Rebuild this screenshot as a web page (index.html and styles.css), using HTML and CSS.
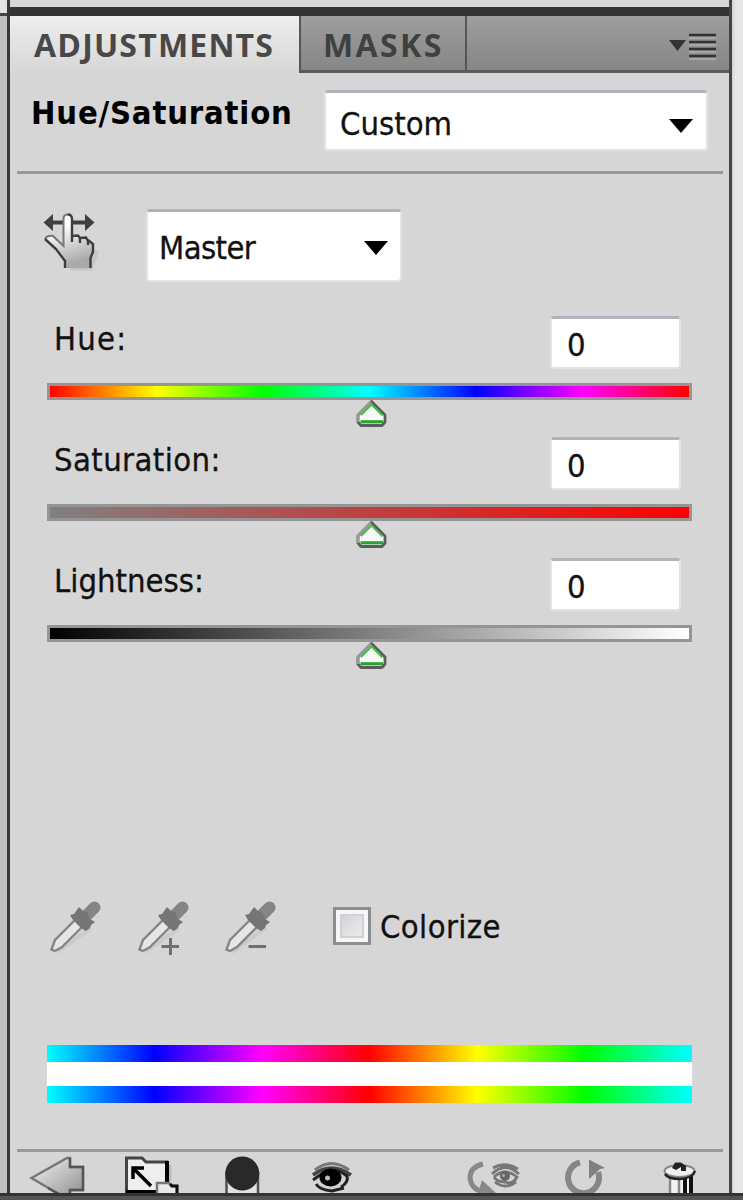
FILE: index.html
```html
<!DOCTYPE html>
<html lang="en">
<head>
    <meta charset="UTF-8">
    <meta name="viewport" content="width=device-width, initial-scale=1.0">
    <title>Adjustments</title>
    <link rel="stylesheet" href="styles.css">
</head>
<body>

<svg class="defs" width="0" height="0">
    <defs>
        <linearGradient id="metal" x1="0" y1="0" x2="1" y2="1">
            <stop offset="0" stop-color="#f4f4f4"/>
            <stop offset="1" stop-color="#8c8c8c"/>
        </linearGradient>
        <linearGradient id="skin" x1="0" y1="0" x2="0.3" y2="1">
            <stop offset="0.3" stop-color="#ffffff"/>
            <stop offset="1" stop-color="#aaaaaa"/>
        </linearGradient>
        <symbol id="dropper" viewBox="46 896 60 62">
            <path d="M57 952L91 928" stroke="#cbcbcb" stroke-width="4"/>
            <path d="M76 919L55 940L51.5 949.5L55 951L62 947L83 926Z" fill="#e6e6e6" stroke="#858585" stroke-width="2.4"/>
            <path d="M85 917L94.500 907.500" stroke="#858585" stroke-width="12" stroke-linecap="round"/>
            <path d="M79 907L83 911L88 913L90 919L95 922L91 925L90 928L86 931L81 928L73 920L70 915L74 914Z" fill="#757575"/>
        </symbol>
        <symbol id="thumb" viewBox="355 398 34 32">
            <path d="M371.500 401.500L385 415V422L382 425.500H361L358 422V415Z" fill="#f8f8f8" stroke="#5c5c5c" stroke-width="2.800" stroke-linejoin="round"/>
            <path d="M358 422V415L371 402" fill="none" stroke="#999" stroke-width="2.500"/>
            <path d="M361 415L371.500 404.500L382.500 415.500" fill="none" stroke="#3fc144" stroke-width="1.800"/>
            <path d="M360.500 421.800H383" stroke="#2aa32e" stroke-width="3.200"/>
        </symbol>
    </defs>
</svg>

<div class="window">
    <div class="left-edge"><div class="left-cap"></div></div>
    <div class="panel">
        <div class="top-strip"></div>

        <div class="tabs">
            <div class="tab active"><span>ADJUSTMENTS</span></div>
            <div class="tab"><span class="masks">MASKS</span></div>
            <div class="tab-space">
                <svg class="menu" width="50" height="28" viewBox="668 32 50 28">
                    <path d="M669 40H686L677.500 51Z" fill="#333"/>
                    <path d="M689 38H716M689 45H716M689 52H716M689 59H716" stroke="#b0b0b0" stroke-width="1.500"/>
                    <path d="M689 35H716M689 42H716M689 49H716M689 56H716" stroke="#333" stroke-width="2.600"/>
                </svg>
            </div>
        </div>

        <div class="header">
            <h1>Hue/Saturation</h1>
            <div class="select preset">
                <span>Custom</span>
                <svg width="24" height="14" viewBox="0 0 24 14"><path d="M0 0H24L12 14Z"/></svg>
            </div>
        </div>

        <div class="content">
            <div class="range-row">
                <svg class="hand" width="64" height="66" viewBox="40 210 64 66">
                    <path d="M70 269.500H91L97 252" fill="none" stroke="#c6c6c6" stroke-width="4"/>
                    <path d="M48 223.500H90" stroke="#404040" stroke-width="4"/>
                    <path d="M43.500 223.500L53 215V232ZM94.500 223.500L85 215V232Z" fill="#404040"/>
                    <path d="M63.500 247V220Q63.500 215.500 67.500 215.500Q72 215.500 72 220V237L78 236.500L80 239L85 238.500L88 241L93 245V253L90 269H66V261L56 249L45 240Q47 236 53 237Z" fill="url(#skin)"/>
                    <path d="M45 240Q47 236 53 237L63.500 247V220Q63.500 215.500 67.500 215.500" fill="none" stroke="#777" stroke-width="2"/>
                    <path d="M67.500 215.500Q72 215.500 72 220V243M72 237L78 236.500L80 239V244M80 239L86 238.500L88 242V246M88 241L93 245V253L90.500 259V269M45 240L56 250L65 262V269" fill="none" stroke="#3d3d3d" stroke-width="2.400"/>
                </svg>
                <div class="select range">
                    <span>Master</span>
                    <svg width="24" height="14" viewBox="0 0 24 14"><path d="M0 0H24L12 14Z"/></svg>
                </div>
            </div>

            <div class="control">
                <div class="control-top"><label class="hue-label">Hue:</label><div class="value">0</div></div>
                <div class="track hue"></div>
                <svg class="thumb" width="34" height="32"><use href="#thumb"/></svg>
            </div>
            <div class="control">
                <div class="control-top"><label class="saturation-label">Saturation:</label><div class="value">0</div></div>
                <div class="track saturation"></div>
                <svg class="thumb" width="34" height="32"><use href="#thumb"/></svg>
            </div>
            <div class="control">
                <div class="control-top"><label>Lightness:</label><div class="value">0</div></div>
                <div class="track lightness"></div>
                <svg class="thumb" width="34" height="32"><use href="#thumb"/></svg>
            </div>

            <div class="tools">
                <svg width="60" height="62"><use href="#dropper"/></svg>
                <svg width="60" height="62"><use href="#dropper"/><path d="M27.500 50.500H45M36.500 42V59" stroke="#707070" stroke-width="3"/></svg>
                <svg width="60" height="62"><use href="#dropper"/><path d="M27.500 50.500H45" stroke="#707070" stroke-width="3"/></svg>
                <div class="checkbox"></div>
                <span class="colorize">Colorize</span>
            </div>

            <div class="spectrum">
                <div class="rainbow"></div>
                <div class="rainbow"></div>
            </div>
        </div>

        <div class="footer">
            <svg width="60" height="41" viewBox="28 1152 60 41">
                <path d="M31.500 1178L67 1158H70V1167H83V1190H70V1199H67Z" fill="url(#metal)" stroke="#777" stroke-width="2.400"/>
                <path d="M70 1158V1167H83V1190H70V1199L66 1198L48 1188" fill="none" stroke="#555" stroke-width="2.400"/>
            </svg>
            <svg width="60" height="41" viewBox="123 1152 60 41">
                <path d="M170 1165V1181" fill="none" stroke="#bbb" stroke-width="3"/>
                <path d="M126.500 1192V1158H142L146 1162H166.500V1192Z" fill="#eee" stroke="#444" stroke-width="3"/>
                <path d="M167 1161V1183M126 1192H157" stroke="#000" stroke-width="4"/>
                <path d="M133 1168L151 1186M144 1168H133V1179" fill="none" stroke="#000" stroke-width="3.500"/>
                <path d="M157 1195V1183H169L172 1186H177V1195Z" fill="#e8e8e8" stroke="#777" stroke-width="2.500"/>
                <path d="M170 1184L172 1186H177V1195" fill="none" stroke="#111" stroke-width="3"/>
            </svg>
            <svg width="40" height="41" viewBox="222 1152 40 41">
                <path d="M226.500 1173V1195H258V1173Z" fill="#e2e2e2" stroke="#505050" stroke-width="2.500"/>
                <circle cx="242.300" cy="1173.500" r="17" fill="#292929"/>
            </svg>
            <svg width="50" height="41" viewBox="307 1152 50 41">
                <path d="M315 1170Q331 1157 349 1170" fill="none" stroke="#777" stroke-width="3"/>
                <path d="M313 1173Q330 1160 350 1174L347 1184Q338 1193 326 1190L313 1179Z" fill="#d0d0d0"/>
                <path d="M313 1175Q331 1161 351 1175" fill="none" stroke="#444" stroke-width="3.500"/>
                <path d="M313 1180L320 1175Q333 1165 347 1176Q349 1182 341 1187M316 1184Q320 1190 332 1191L344 1188" fill="none" stroke="#222" stroke-width="3"/>
                <ellipse cx="330.500" cy="1177.500" rx="11" ry="9" fill="#000"/>
                <circle cx="327.500" cy="1178" r="2.500" fill="#bbb"/>
            </svg>
            <svg width="60" height="41" viewBox="466 1152 60 41">
                <path d="M483 1164Q470 1167 470 1178Q471 1189 483 1192" fill="none" stroke="#888" stroke-width="5"/>
                <path d="M482 1180L496 1193H478Z" fill="#888"/>
                <path d="M493 1168Q505 1161 518 1169M492 1174Q505 1161 519 1174M494 1177Q505 1167 517 1177Q513 1185 505 1182Q497 1182 494 1177M495 1182Q505 1190 516 1182" fill="none" stroke="#777" stroke-width="2.800"/>
                <circle cx="505" cy="1176" r="5" fill="#666"/>
                <circle cx="503.500" cy="1175.500" r="1.500" fill="#aaa"/>
            </svg>
            <svg width="50" height="41" viewBox="562 1152 50 41">
                <path d="M580 1162.500A15.500 15.500 0 1 0 598 1172" fill="none" stroke="#868686" stroke-width="6"/>
                <path d="M589 1159.500L605 1168L600 1169L589 1179Z" fill="#808080"/>
            </svg>
            <svg width="45" height="41" viewBox="660 1152 45 41">
                <path d="M668 1176H693L691 1195H670Z" fill="#f2f2f2"/>
                <path d="M670 1178V1195M679 1178V1195" stroke="#888" stroke-width="2.500"/>
                <path d="M685 1178V1195M691 1176V1195" stroke="#111" stroke-width="4"/>
                <ellipse cx="679.500" cy="1171" rx="15" ry="6" fill="#efefef" stroke="#888" stroke-width="2"/>
                <path d="M665 1174Q668 1179 680 1179Q693 1178 695 1171" fill="none" stroke="#222" stroke-width="2.500"/>
                <path d="M672 1168L675 1162.500H681L686 1166V1171H681V1167L676 1170Z" fill="#222"/>
            </svg>
        </div>
    </div>
    <div class="right-edge"></div>
</div>
<div class="bottom-edge"></div>

</body>
</html>
```
FILE: styles.css
```css
* {
    box-sizing: border-box;
}

body {
    margin: 0;
    width: 743px;
    height: 1200px;
    overflow: hidden;
    background-color: #d6d6d6;
    color: #111;
    font-family: "DejaVu Sans Condensed", "DejaVu Sans", sans-serif;
    font-stretch: condensed;
    font-size: 32.5px;
    line-height: 40px;
    -webkit-text-stroke: 0.3px;
}

svg {
    display: block;
    flex-shrink: 0;
}

.defs {
    position: absolute;
}

.window {
    display: flex;
    height: 1193px;
}

.left-edge {
    width: 10px;
    background-color: #c0c0c0;
    border-right: 3px solid #383838;
}

.left-cap {
    height: 16px;
    background-color: #e4e4e4;
    border-bottom: 3px solid #444;
}

.right-edge {
    width: 14px;
    background: linear-gradient(to right, #d2d2d2, #e8e8e8 4px);
    border-left: 3px solid #444;
}

.bottom-edge {
    height: 7px;
    background-color: #555;
    border-top: 3px solid #333;
}

.panel {
    width: 719px;
    display: flex;
    flex-direction: column;
}

.top-strip {
    height: 16px;
    border-bottom: 9px solid #333;
}

.tabs {
    display: flex;
    height: 57px;
    font-family: "Open Sans", sans-serif;
    font-stretch: normal;
    font-size: 32px;
    font-weight: 700;
    letter-spacing: 1.2px;
    color: #484848;
    -webkit-text-stroke: 0;
}

.tab {
    width: 166px;
    padding: 9px 0 0 22px;
    background: linear-gradient(#9e9e9e, #868686);
    border-right: 2px solid #555;
    border-bottom: 3px solid #5a5a5a;
}

.tab.active {
    width: 291px;
    padding-left: 24px;
    background: linear-gradient(#eeeeee, #d6d6d6);
    border-bottom: none;
}

.masks {
    letter-spacing: 2.4px;
    color: #404040;
}

.tab-space {
    flex: 1;
    background: linear-gradient(#9e9e9e, #868686);
    border-bottom: 3px solid #5a5a5a;
}

.menu {
    margin: 16px 0 0 201px;
}

.header {
    display: flex;
    justify-content: space-between;
    height: 101px;
    margin: 0 6px 0 7px;
    padding: 17px 15px 0 14px;
    border-bottom: 3px solid #999;
}

h1 {
    margin: 3px 0 0;
    font-size: 32.5px;
    font-weight: 700;
    letter-spacing: 0.8px;
    color: #000;
    white-space: nowrap;
    -webkit-text-stroke: 0;
}

.select {
    display: flex;
    align-items: center;
    justify-content: space-between;
    background-color: #fff;
    border: 2px solid #e0e4ea;
    border-top: 3px solid #b2b2ba;
    border-radius: 4px;
}

.preset {
    width: 384px;
    height: 61px;
    padding: 5px 13px 0 14px;
}

.preset svg {
    margin-top: 4px;
}

.range {
    width: 256px;
    height: 73px;
    margin-left: 42px;
    padding: 3px 12px 0 11px;
    letter-spacing: -0.6px;
}

.content {
    padding-left: 37px;
    height: 975px;
}

.range-row {
    display: flex;
    height: 142px;
    padding-top: 35px;
    margin-left: -7px;
}

.control {
    width: 645px;
    height: 121px;
}

.control-top {
    display: flex;
    justify-content: space-between;
    height: 67px;
    padding: 0 11px 0 7px;
}

.control-top label {
    margin-top: 3px;
}

.hue-label {
    letter-spacing: 1.2px;
}

.saturation-label {
    letter-spacing: 0.4px;
}

.value {
    width: 131px;
    height: 53px;
    padding: 6px 0 0 15px;
    background-color: #fff;
    border: 2px solid #e0e4ea;
    border-top: 3px solid #b2b2ba;
    border-radius: 4px;
}

.track {
    height: 17px;
    border: 3px solid #959595;
}

.hue {
    background: linear-gradient(to right, #f00, #ff0, #0f0, #0ff, #00f, #f0f, #f00);
}

.saturation {
    background: linear-gradient(to right, #808080, #f00);
}

.lightness {
    background: linear-gradient(to right, #000, #fff);
}

.thumb {
    margin: -2px 0 0 308px;
}

.tools {
    display: flex;
    gap: 27.5px;
    height: 62px;
    margin: 217px 0 0 -1px;
}

.checkbox {
    width: 38px;
    height: 38px;
    margin: 11px 0 0 24px;
    background: linear-gradient(135deg, #c8ccd2, #f4f4f4);
    border: 3px solid #8e8e8e;
    box-shadow: inset 0 0 0 4px #f6f6f6, inset 0 0 0 6px #cfd1d4;
}

.colorize {
    margin: 11px 0 0 -18px;
    letter-spacing: 0.4px;
}

.spectrum {
    display: flex;
    flex-direction: column;
    justify-content: space-between;
    width: 645px;
    height: 58px;
    margin-top: 87px;
    background-color: #fff;
}

.rainbow {
    height: 17px;
    background: linear-gradient(to right, #0ff, #00f, #f0f, #f00, #ff0, #0f0, #0ff);
}

.footer {
    display: grid;
    grid-template-columns: 95px 99px 85px 159px 96px 98px 45px;
    height: 44px;
    margin: 0 6px 0 7px;
    padding-left: 11px;
    border-top: 3px solid #999;
    overflow: hidden;
}
```
